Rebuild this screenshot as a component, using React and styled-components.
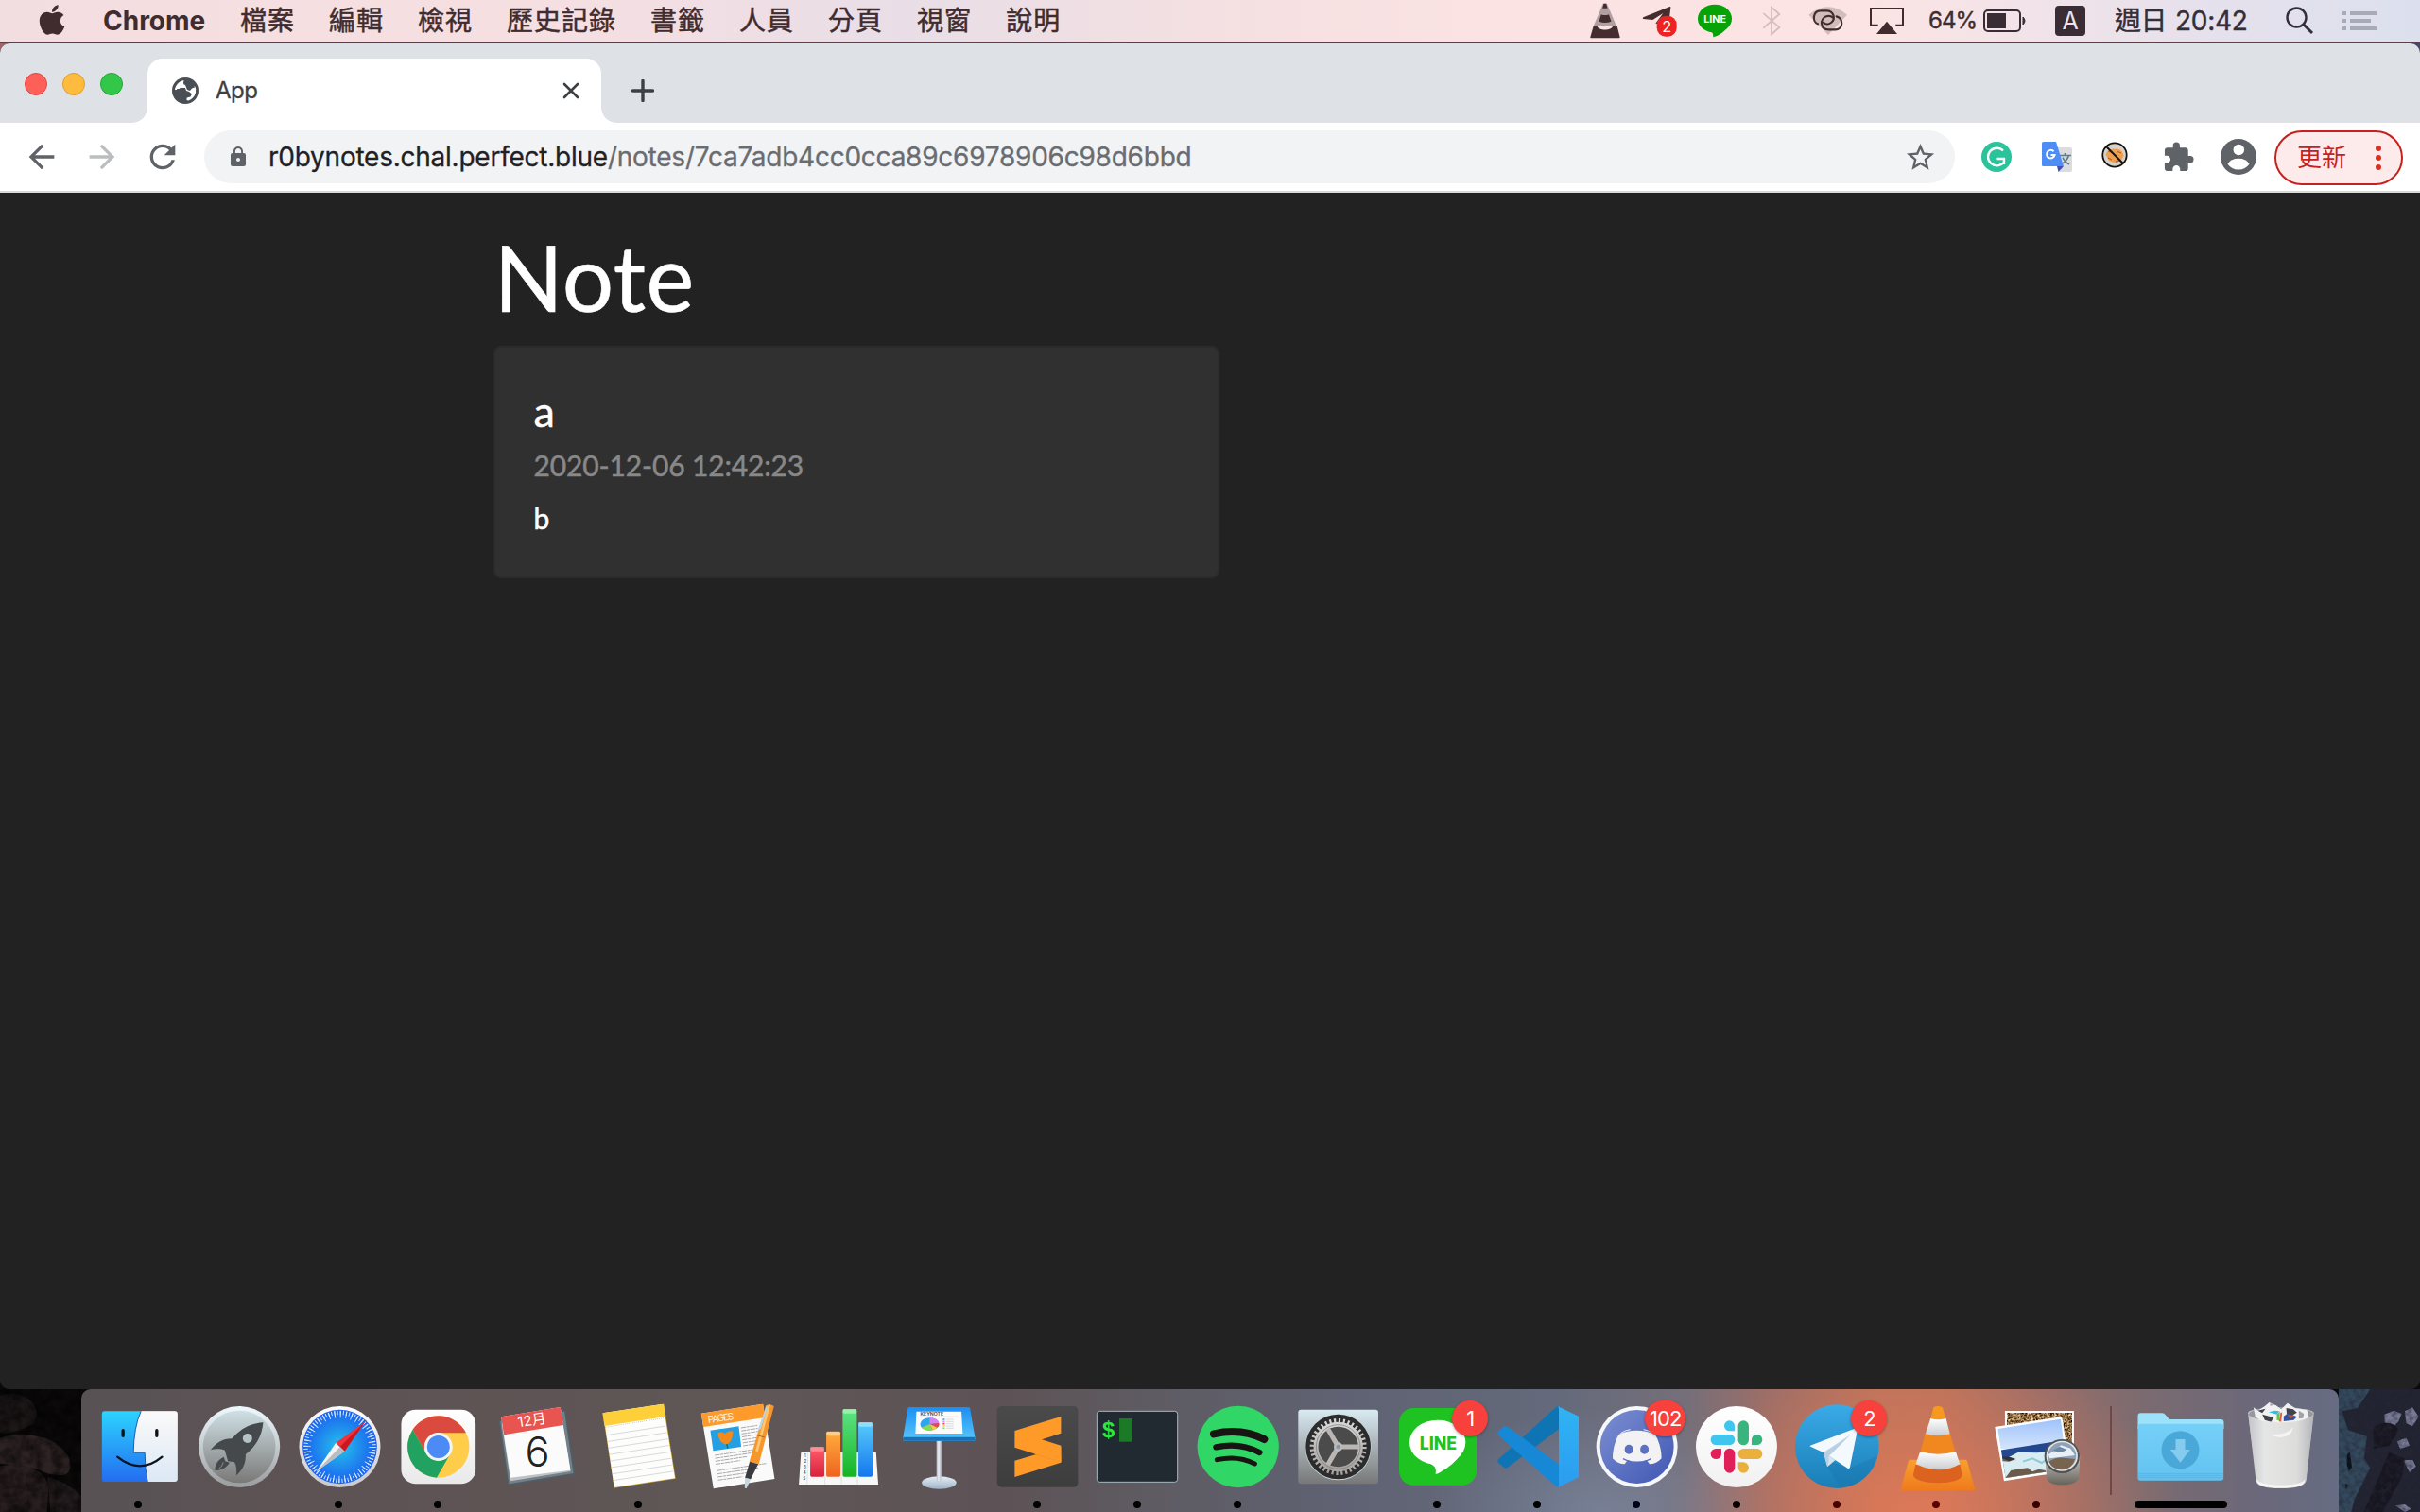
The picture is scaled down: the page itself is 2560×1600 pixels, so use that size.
import React from "react";
import styled, { createGlobalStyle, css } from "styled-components";
import { FaApple } from "react-icons/fa";
import {
  MdArrowBack,
  MdArrowForward,
  MdExtension,
  MdLock,
  MdRefresh,
  MdStarBorder,
} from "react-icons/md";

const uiFont = `Inter, "Noto Sans CJK TC", "Noto Sans CJK SC", sans-serif`;
const noteFont = `Lato, "Noto Sans CJK TC", sans-serif`;

const GlobalStyle = createGlobalStyle`
  html, body { margin: 0; padding: 0; background: #0c0a0c; }
  *, *::before, *::after { box-sizing: border-box; }
  svg { display: block; flex: none; }
`;

const Desktop = styled.div`
  width: 2560px;
  height: 1600px;
  display: flex;
  flex-direction: column;
  overflow: hidden;
  background: linear-gradient(90deg, #a0646a 0, #6a4048 50%, #45466a 100%) 0 0 / 100% 100px no-repeat, #09080a;
  font-family: ${uiFont};
`;

/* ---------- menu bar ---------- */

const MenuBar = styled.header`
  flex: none;
  height: 46px;
  padding: 0 46px 0 41px;
  display: flex;
  align-items: center;
  justify-content: space-between;
  color: #402c2e;
  border-bottom: 2px solid #5e3f49;
  background: linear-gradient(90deg, #f2dde1 0, #f6dfe0 300px, #f5dfe2 600px, #e9dee7 960px, #f5e0e1 1320px, #fce3e3 1600px, #fbe4e3 1980px, #f3e3e9 2130px, #e6e1ec 2330px, #dce0ee 2560px);
`;

const MenuGroup = styled.div`
  display: flex;
  align-items: center;
  height: 44px;
  gap: ${(p) => p.$gap || 0}px;
`;

const AppleBox = styled.div`
  width: 68px;
  height: 38px;
  margin-left: -4px;
  padding-right: 32px;
  margin-right: 4px;
`;

const AppName = styled.strong`
  width: 109px;
  font-size: 28px;
  line-height: 44px;
  font-weight: 700;
`;

const MenuItem = styled.span`
  font-size: 28px;
  line-height: 45px;
  letter-spacing: 1px;
  white-space: nowrap;
  -webkit-text-stroke: 0.5px currentColor;
`;

const StatusItem = styled.div`
  display: flex;
  width: ${(p) => p.$w}px;
  margin-left: ${(p) => p.$ml || 0}px;
  opacity: ${(p) => p.$o || 1};
`;

const StatusText = styled.span`
  width: ${(p) => p.$w}px;
  margin-left: ${(p) => p.$ml}px;
  font-size: ${(p) => p.$size}px;
  letter-spacing: ${(p) => p.$ls}px;
  line-height: 44px;
  white-space: nowrap;
  color: ${(p) => p.$color || "inherit"};
  -webkit-text-stroke: 0.4px currentColor;
`;

const InputSource = styled.span`
  width: 32px;
  height: 32px;
  margin-left: 30px;
  border-radius: 4px;
  background: #392c34;
  color: #f0e2ea;
  font-size: 25px;
  line-height: 33px;
  text-align: center;
`;

/* ---------- browser window ---------- */

const Window = styled.main`
  flex: none;
  height: 1424px;
  display: flex;
  flex-direction: column;
  border-radius: 10px;
  overflow: hidden;
  background: #222222;
`;

const TabStrip = styled.div`
  flex: none;
  height: 84px;
  display: flex;
  align-items: flex-end;
  background: #dee1e6;
`;

const TrafficLights = styled.div`
  width: 156px;
  height: 84px;
  padding: 31px 0 0 26px;
  display: flex;
  gap: 16px;
`;

const Light = styled.span`
  width: 24px;
  height: 24px;
  border-radius: 50%;
  background: ${(p) => p.$fill};
  border: 1px solid ${(p) => p.$edge};
`;

const Tab = styled.div`
  position: relative;
  width: 480px;
  height: 68px;
  padding: 0 23px 0 26px;
  display: flex;
  align-items: center;
  border-radius: 16px 16px 0 0;
  background: #ffffff;
  color: #3c4043;

  &::before,
  &::after {
    content: "";
    position: absolute;
    bottom: 0;
    width: 16px;
    height: 16px;
  }
  &::before {
    left: -16px;
    background: radial-gradient(circle at 0 0, transparent 15.5px, #fff 16px);
  }
  &::after {
    right: -16px;
    background: radial-gradient(circle at 100% 0, transparent 15.5px, #fff 16px);
  }
`;

const TabTitle = styled.span`
  flex: 1;
  margin-left: 18px;
  font-size: 24px;
  line-height: 32px;
  letter-spacing: -0.5px;
  -webkit-text-stroke: 0.3px currentColor;
`;

const NewTab = styled.div`
  height: 68px;
  padding: 22px 0 0 32px;
`;

const Toolbar = styled.div`
  flex: none;
  height: 74px;
  display: flex;
  align-items: center;
  background: #ffffff;
  border-bottom: 2px solid #d9d9da;
  color: #5f6368;
`;

const NavButtons = styled.div`
  width: 216px;
  padding-left: 24px;
  display: flex;
  align-items: center;
  gap: 24px;
`;

const NavIcon = styled.span`
  display: flex;
  width: 40px;
  opacity: ${(p) => (p.$disabled ? 0.42 : 1)};
`;

const Omnibox = styled.div`
  width: 1852px;
  height: 56px;
  padding: 0 19px 0 24px;
  display: flex;
  align-items: center;
  border-radius: 28px;
  background: #f1f3f4;
`;

const Url = styled.span`
  flex: 1;
  margin-left: 20px;
  font-size: 28px;
  line-height: 56px;
  letter-spacing: -0.24px;
  color: #696c70;
  -webkit-text-stroke: 0.3px currentColor;
`;

const UrlHost = styled.span`
  color: #1f2124;
`;

const Extensions = styled.div`
  display: flex;
  align-items: center;
`;

const ExtIcon = styled.span`
  display: flex;
  margin-left: ${(p) => p.$ml}px;
  margin-top: ${(p) => p.$mt || 0}px;
`;

const UpdateButton = styled.div`
  width: 136px;
  height: 58px;
  margin-left: 19px;
  margin-top: 1px;
  padding: 0 20px 0 22px;
  display: flex;
  align-items: center;
  justify-content: space-between;
  border: 2px solid #c5221f;
  border-radius: 29px;
  background: #fcebea;
  color: #c5221f;
  font-size: 26px;
  line-height: 50px;
`;

const Dots = styled.span`
  display: flex;
  flex-direction: column;
  gap: 4px;
  padding-right: 1px;
`;

const Dot = styled.i`
  width: 6px;
  height: 6px;
  border-radius: 50%;
  background: #d93025;
`;

/* ---------- note page ---------- */

const Page = styled.section`
  flex: 1;
  padding: 31.4px 0 0 522.4px;
  background: #222222;
  color: #ffffff;
  font-family: ${noteFont};
`;

const PageTitle = styled.h1`
  margin: 0 0 16px;
  font-size: 96px;
  line-height: 115px;
  font-weight: 400;
  letter-spacing: 0.5px;
  -webkit-text-stroke: 0.6px currentColor;
`;

const NoteCard = styled.article`
  width: 767.5px;
  height: 245.4px;
  padding: 40px;
  border: 2px solid #2b2b2b;
  border-radius: 8px;
  background: #303030;
  -webkit-text-stroke: 0.5px currentColor;
`;

const NoteTitle = styled.h4`
  margin: 0 0 12px;
  font-size: 45px;
  line-height: 54px;
  font-weight: 400;
`;

const NoteDate = styled.h6`
  margin: 0 0 16px;
  font-size: 30px;
  line-height: 36px;
  font-weight: 400;
  letter-spacing: -0.15px;
  color: #888888;
`;

const NoteBody = styled.p`
  margin: 0;
  font-size: 30px;
  line-height: 45px;
`;

/* ---------- dock ---------- */

const DesktopEdge = styled.footer`
  flex: none;
  height: 130px;
  display: flex;
`;

const Dock = styled.nav`
  width: 2388px;
  height: 130px;
  padding-left: 7.5px;
  display: flex;
  border-radius: 10px 10px 0 0;
  background:
    radial-gradient(ellipse 270px 170px at 1950px 130px, rgba(232, 122, 86, 0.75), transparent 100%),
    radial-gradient(ellipse 190px 110px at 1610px 130px, rgba(124, 134, 158, 0.75), transparent 100%),
    linear-gradient(90deg, #585254 0, #5e5354 280px, #5f5656 700px, #5d5356 980px, #5e5b62 1130px, #5f6272 1330px, #646a7b 1560px, #766f79 1700px, #9b6e68 1780px, #bb735c 1900px, #b9735d 1970px, #9a6e68 2070px, #7b6b70 2180px, #6b687a 2300px, #666c82 2388px);
`;

const DockTile = styled.div`
  position: relative;
  flex: none;
  width: 105.68px;
  display: flex;
  flex-direction: column;
  align-items: center;
`;

const TileArt = styled.svg`
  width: 105.68px;
  height: 110px;
  overflow: visible;
  font-family: ${uiFont};
`;

const Running = styled.i`
  width: 8px;
  height: 8px;
  margin: 8px 0 0;
  border-radius: 50%;
  background: ${(p) => p.$color || "#000"};
  ${(p) =>
    p.$stack &&
    css`
      width: 98px;
      border-radius: 4px;
    `}
`;

const Badge = styled.span`
  position: absolute;
  top: 12px;
  left: ${(p) => p.$left}px;
  min-width: 38px;
  height: 38px;
  padding: 0 5px;
  border-radius: 19px;
  background: #f8413d;
  box-shadow: 0 1px 3px rgba(0, 0, 0, 0.35);
  color: #fff;
  font-size: 22px;
  line-height: 38px;
  letter-spacing: -1px;
  text-align: center;
`;

const Separator = styled.i`
  flex: none;
  width: 2px;
  height: 94px;
  margin: 18px 20.5px 0 24.8px;
  background: #71474a;
`;

/* ---------- menu bar glyphs ---------- */

const MenuVlc = () => (
  <svg width="32" height="38" viewBox="67 10 95 112">
    <path d="M108 12h12l30 70H78z" fill="#b29fa1" />
    <path d="M110 12h8l4 15h-16zM102 46q12 5 24 0l8 22q-20 8-39 0zM78 82h11c5 16 45 16 50 0h13l9 36q0 2-3 2H70q-3 0-2-3z" fill="#432d2f" />
  </svg>
);

const MenuTelegram = () => (
  <svg width="38" height="36" viewBox="232 22 114 108">
    <path d="M236 65 320 31q4-1 3 3l-4 34-20 20-24-4 24-32-33 21-30-3q-4-2 0-5z" fill="#432d2f" />
    <rect x="279" y="60" width="63" height="66" rx="28" fill="#ee2222" />
    <text x="310.500" y="111" fontSize="49" fill="#fff" textAnchor="middle" fontFamily="Inter">2</text>
  </svg>
);

const MenuLine = () => (
  <svg width="36" height="36" viewBox="408 13 108 106">
    <ellipse cx="462" cy="59" rx="54" ry="45" fill="#06a206" />
    <path d="M430 90q30 8 27 28 30-8 47-34z" fill="#06a206" />
    <text x="462.500" y="71" fontSize="33" fontWeight="700" fill="#fff" textAnchor="middle" textLength="71" lengthAdjust="spacingAndGlyphs" fontFamily="Inter">LINE</text>
  </svg>
);

const MenuBluetooth = () => (
  <svg width="20" height="34" viewBox="609 18 60 102">
    <path d="m613 45 51 45-25 22V26l25 22-51 44" fill="none" stroke="#402c2e" strokeWidth="5" />
  </svg>
);

const MenuHotspot = () => (
  <svg width="42" height="32" viewBox="757 18 126 94">
    <path d="M758 46q61-50 122 0l-60 64z" fill="#402c2e" opacity=".22" />
    <g fill="none" stroke="#402c2e" strokeWidth="6.500" strokeLinecap="round">
      <path d="M787 75c-18-6-18-42 10-42h18c22 0 30 26 14 38-8 6-18 5-24-1" />
      <path d="M846 51c24 6 22 42-4 42h-20c-28 0-30-34-8-42 8-3 14-2 20 3" />
    </g>
  </svg>
);

const MenuAirplay = () => (
  <svg width="36" height="30" viewBox="954 22 108 88">
    <path d="M980 80h-23V27h102v53h-23" fill="none" stroke="#402c2e" strokeWidth="6" />
    <path d="m1008 68 33 40h-66z" fill="#402c2e" />
  </svg>
);

const MenuBattery = () => (
  <svg width="46" height="26" viewBox="0 0 46 26">
    <rect x="1" y="2" width="38" height="22" rx="4" fill="none" stroke="#392c34" strokeWidth="2" />
    <rect x="4" y="5" width="20" height="16" fill="#392c34" />
    <path d="M42 9q4 4 0 8z" fill="#392c34" stroke="#392c34" />
  </svg>
);

const MenuSearch = () => (
  <svg width="30" height="30" viewBox="0 0 30 30">
    <circle cx="11.500" cy="11.500" r="10" fill="none" stroke="#352e38" strokeWidth="2.400" />
    <path d="m18.500 18.500 9.500 9.500" stroke="#352e38" strokeWidth="3" />
  </svg>
);

const MenuList = () => (
  <svg width="36" height="20" viewBox="0 0 36 20">
    <path d="M0 2h4M8 2h28M0 10h4M8 10h22M0 18h4M8 18h28" stroke="#aaa9b6" strokeWidth="4" />
  </svg>
);

/* ---------- toolbar glyphs ---------- */

const Globe = () => (
  <svg width="28" height="28" viewBox="0 0 28 28">
    <circle cx="14" cy="14" r="14" fill="#4a4f55" />
    <path d="M3 13C3.600 8 7.500 4 12.500 3L12 5.500q0 2.500 2.500 2.500.500 2.500 3 3 3 .5 4-1.500l2.500-.5Q26 12 25 16q-1.500 6-7.500 8.500l-2-.5v-2.500l4-1 1.500-3-3-2.500-3-1-1-3H8.500L7 13z" fill="#fff" />
    <path d="M14 8q3-.5 3-3l2-1.500 4 4 1 3-3 1-2 2.500-3-1zM5 12h5l3 3-1 3.500 3 .5 1 2-4 4-4-3z" fill="#4a4f55" />
  </svg>
);

const CloseGlyph = () => (
  <svg width="18" height="18" viewBox="0 0 18 18">
    <path d="m2 2 14 14M16 2 2 16" stroke="#3c4043" strokeWidth="2.600" strokeLinecap="round" />
  </svg>
);

const PlusGlyph = () => (
  <svg width="24" height="24" viewBox="0 0 24 24">
    <path d="M12 1.500v21M1.500 12h21" stroke="#3c4043" strokeWidth="3.400" strokeLinecap="round" />
  </svg>
);

const Grammarly = () => (
  <svg width="32" height="32" viewBox="0 0 32 32">
    <circle cx="16" cy="16" r="16" fill="#2ac39b" />
    <path d="M23 9.500A9.300 9.300 0 1 0 23.500 22M16.500 18h7.500v6" fill="none" stroke="#fff" strokeWidth="2.300" />
  </svg>
);

const Translate = () => (
  <svg width="32" height="32" viewBox="0 0 32 32">
    <path d="M12 6h18q2 0 2 2v22q0 2-2 2H18z" fill="#dcdcdc" />
    <path d="M19 14.500h12M24.500 12v2.500M28.500 14.500q-2 6-7.500 9M22 16.500q2 5 7 7.500" fill="none" stroke="#607d8b" strokeWidth="1.700" />
    <path d="m16 26h7l-5.500 6z" fill="#3f51b5" />
    <path d="M1.500 0H15l8 26H1.500Q0 26 0 24.500v-23Q0 0 1.500 0z" fill="#4e8df5" />
    <path d="M12.500 10.200A4.300 4.300 0 1 0 13.600 14H9.500" fill="none" stroke="#fff" strokeWidth="2" />
  </svg>
);

const NoCookie = () => (
  <svg width="28" height="28" viewBox="0 0 28 28">
    <circle cx="14" cy="14" r="12.700" fill="#d6d2cd" stroke="#17120e" strokeWidth="1.800" />
    <path d="M4.500 13.500q2-5 7.500-6l7 .5q4 2.500 4.500 7l-3 5.500-6.500 2-6-2.500z" fill="#f0a04c" />
    <path d="m7 17 4 2m4 2 4-1M7 10l3 1m6-1 5 2" stroke="#b9652b" strokeWidth="1.300" />
    <path d="m5 5 18 18" stroke="#17120e" strokeWidth="2" />
  </svg>
);

const Avatar = () => (
  <svg width="38" height="38" viewBox="0 0 38 38">
    <circle cx="19" cy="19" r="19" fill="#5f6368" />
    <circle cx="19.300" cy="11.500" r="5.800" fill="#fff" />
    <path d="M7.500 26.500Q11 20.800 19 20.800t11.500 5.700q-4 6-11.500 6t-11.500-6z" fill="#fff" />
  </svg>
);

/* ---------- dock artwork ---------- */

const Grad = ({ id, from, to, diag }) => (
  <linearGradient id={id} x1="0" y1="0" x2={diag ? 1 : 0} y2="1">
    <stop offset="0" stopColor={from} />
    <stop offset="1" stopColor={to} />
  </linearGradient>
);

const Finder = () => (
  <>
    <Grad id="fi1" from="#2dd3ff" to="#236df0" />
    <Grad id="fi2" from="#fafafa" to="#dce8f4" />
    <rect x="321" y="130" width="240" height="224" rx="9" fill="url(#fi1)" />
    <path d="M445 130h107q9 0 9 9v206q0 9-9 9h-86q-9-40-9-91h-36q1-83 24-133z" fill="url(#fi2)" />
    <path d="M445 130q-23 50-24 132h36q0 52 9 92" fill="none" stroke="#1a5bb0" strokeWidth="3" />
    <path d="M388 191v17M495 191v17" stroke="#111" strokeWidth="10" strokeLinecap="round" />
    <path d="M370 275q72 58 142 0" fill="none" stroke="#0b1420" strokeWidth="7" strokeLinecap="round" />
  </>
);

const Launchpad = () => (
  <>
    <Grad id="la1" from="#eefaff" to="#9a9c9e" />
    <Grad id="la2" from="#cfe0e5" to="#7a7977" />
    <circle cx="759" cy="243" r="129" fill="url(#la1)" />
    <circle cx="759" cy="243" r="115" fill="url(#la2)" />
    <path d="M835 166c-44 3-79 25-99 51-26 0-48 10-68 36 16-5 32-4 45 1l10 35 20 3c8 12 8 27 6 42 22-18 32-42 30-67 34-26 52-60 56-101z" fill="#45494c" />
    <circle cx="785" cy="216" r="15" fill="#b5c2c6" />
    <path d="M682 318c0-18 8-34 28-43l4 14 14 4c-9 16-26 25-46 25z" fill="#45494c" />
    <path d="m694 312c8-4 12-12 14-20" fill="none" stroke="#8c9294" strokeWidth="3" />
  </>
);

const Safari = () => (
  <>
    <radialGradient id="sa1">
      <stop offset="0" stopColor="#24c3ea" />
      <stop offset="1" stopColor="#1b5ff0" />
    </radialGradient>
    <Grad id="sa2" from="#fdfdfd" to="#c9c9cc" />
    <circle cx="1077" cy="243" r="129" fill="url(#sa2)" />
    <circle cx="1077" cy="243" r="118" fill="url(#sa1)" />
    <circle cx="1077" cy="243" r="108" fill="none" stroke="#d3ebff" strokeWidth="13" strokeDasharray="3 6.425" />
    <circle cx="1077" cy="243" r="103" fill="none" stroke="#d3ebff" strokeWidth="22" strokeDasharray="3 14.977" />
    <path d="m1158 163-94 68 28 26z" fill="#f0333a" />
    <path d="m1158 163-80 80 14 14z" fill="#cc1722" />
    <path d="m1002 322 62-91 28 26z" fill="#f3f3f3" />
    <path d="m1002 322 76-79 14 14z" fill="#b9bcc0" />
  </>
);

const Chrome = () => (
  <>
    <Grad id="ch1" from="#ffffff" to="#e9e9ea" />
    <rect x="1271" y="125" width="236" height="236" rx="46" fill="url(#ch1)" />
    <circle cx="1389" cy="243" r="98" fill="#ffcd4a" />
    <path d="M1307.100 189.100A98 98 0 0 1 1476.600 199H1389A44 44 0 0 0 1350.900 265z" fill="#db4a3f" />
    <path d="M1307.100 189.100A98 98 0 0 0 1383.300 340.900L1427.100 265A44 44 0 0 1 1350.900 265z" fill="#22a260" />
    <circle cx="1389" cy="243" r="45" fill="#f4f4f4" />
    <circle cx="1389" cy="243" r="36" fill="#4c8bf5" />
  </>
);

const Calendar = () => (
  <>
    <path d="m51 160 213-33 32 204-214 36z" fill="#4f5d66" />
    <path d="m57 163 204-32 28 196-204 34z" fill="#72808a" />
    <path d="m62 170 188-29 30 180-190 31z" fill="#bfc1c2" />
    <path d="m60 148 188-31 32 200-190 24z" fill="#fbfbfb" />
    <path d="m60 148 188-31 10 57-189 31z" fill="#e8544f" />
    <text transform="translate(160 174) rotate(-9)" fontSize="45" fill="#fff" textAnchor="middle">12月</text>
    <text x="175" y="305" fontSize="130" fontWeight="300" fill="#222" textAnchor="middle">6</text>
  </>
);

const Notes = () => (
  <>
    <path d="m381 136 194-29 38 237-195 30z" fill="#c9a024" />
    <path d="m383 136 190-29 38 236-193 29z" fill="#fdfdfc" />
    <path d="m381 136 194-29 7 40-195 30z" fill="#fdd03a" />
    <path d="m388 181 194-30" stroke="#8b8b80" strokeWidth="2" strokeDasharray="2 4" />
    <g stroke="#c5c5c8" strokeWidth="2">
      {[0, 1, 2, 3, 4, 5, 6, 7].map((i) => (
        <path key={i} d={`m${393 + i * 3.400} ${206 + i * 20.500} 190-29`} />
      ))}
    </g>
  </>
);

const Pages = () => (
  <>
    <path d="m693 137 196-30 37 238-194 31z" fill="#fafafa" />
    <path d="m693 137 196-30 7 43-196 30z" fill="#fd9a2c" />
    <text transform="translate(757 162) rotate(-8.500)" fontSize="31" fill="#fff3e0" textAnchor="middle" textLength="84">PAGES</text>
    <path d="m722 191 90-13 8 65-89 13z" fill="#259fe4" />
    <path d="M746 200q14-8 22 2 10-12 26-8-2 34-20 42-24-4-28-36z" fill="#f58a1c" />
    <path d="m774 234 3 14" stroke="#2a6b3a" strokeWidth="4" />
    <g stroke="#a9a9a9" strokeWidth="3" strokeDasharray="16 2 9 2">
      {[0, 1, 2, 3, 4, 5, 6].map((i) => (
        <path key={i} d={`m${819 + i * 1.200} ${183 + i * 9.500} 52-8`} />
      ))}
      {[0, 1, 2, 3].map((i) => (
        <path key={i} d={`m${736 + i} ${270 + i * 9.500} ${144 - i * 22}-${21 - i * 3}`} />
      ))}
      {[0, 1, 2, 3].map((i) => (
        <path key={i} d={`m${743 + i} ${319 + i * 10} ${156 - i * 26}-${23 - i * 4}`} />
      ))}
    </g>
    <path d="M898 112q12-8 26 2l-48 184-30-8z" fill="#f6962b" />
    <path d="m905 112 8-3-40 150-8-3z" fill="#ffc774" />
    <path d="m900 113-28 78 10-4 22-70z" fill="#b9d7ea" />
    <path d="m869 206 26 7" stroke="#b5651a" strokeWidth="3" />
    <path d="m847 290 27 8-24 48-18-4z" fill="#3b3b3f" />
    <path d="m832 341 18 5-13 29q-5 1-6-2z" fill="#c8d6de" />
  </>
);

const numberBars = [
  [1041, 243, "#ff5f6d", "#d9203a", "#ff8c92"],
  [1092, 194, "#ffae3d", "#ef6320", "#ffce80"],
  [1144, 123, "#5fe487", "#16b323", "#92f2a8"],
  [1194, 165, "#58ccfb", "#1377ee", "#90dcfc"],
];

const Numbers = () => (
  <>
    <path d="M1012 259h238l7 104h-252z" fill="#f7f7f8" />
    <path d="M1038 259h-4l-3 104M1088 259v104M1140 259v104M1191 259v104" stroke="#d7d7d9" strokeWidth="2" fill="none" />
    <g fontSize="13" fontWeight="600" fill="#555">
      {[1, 2, 3, 4, 5].map((n) => (
        <text key={n} x={1023 - n} y={257 + n * 18}>{n}</text>
      ))}
    </g>
    {numberBars.map(([x, y, a, b, cap], i) => (
      <g key={x}>
        <Grad id={`nu${i}`} from={a} to={b} />
        <rect x={x} y={y} width="45" height={338 - y} rx="5" fill={`url(#nu${i})`} />
        <rect x={x + 1} y={y + 1} width="43" height="13" rx="4" fill={cap} />
      </g>
    ))}
  </>
);

const Keynote = () => (
  <>
    <Grad id="ke1" from="#1b8ef4" to="#59c8fb" />
    <Grad id="ke2" from="#e6edf5" to="#9fb4c9" />
    <ellipse cx="1449" cy="357" rx="55" ry="20" fill="url(#ke2)" />
    <path d="M1441 222h15v130q-7 5-15 0z" fill="#c3ccd6" />
    <path d="M1446 222h4v130h-4z" fill="#eef2f6" />
    <path d="M1355 117h187q4 0 5 4l17 97q0 6-5 6h-220q-6 0-5-6l16-97q1-4 5-4z" fill="url(#ke1)" />
    <path d="M1336 212h226l2 8q0 4-5 4h-220q-6 0-5-6z" fill="#1b6fb6" />
    <path d="M1377 131h143l4 70h-150z" fill="#fbfbfb" />
    <text x="1389" y="144" fontSize="13" fontWeight="600" fill="#444" textLength="74" lengthAdjust="spacingAndGlyphs">KEYNOTE</text>
    <path d="M1388 147h121" stroke="#ccc" />
    <ellipse cx="1419" cy="171" rx="30" ry="20" fill="#2fa4ee" />
    <path d="M1419 171v-20q28 0 30 17z" fill="#d780f0" />
    <path d="m1419 171 30-3q2 9-6 14z" fill="#f23f55" />
    <path d="m1419 171 24 11q-6 6-14 8z" fill="#fcc733" />
    <path d="m1419 171 10 19q-26 3-36-8z" fill="#86d957" />
    <g strokeWidth="5">
      {["#3aa6ee", "#d780f0", "#f23f55", "#fcc733", "#86d957"].map((c, i) => (
        <g key={c}>
          <path d={`M1461 ${156 + i * 7}h6`} stroke={c} />
          <path d={`M1471 ${156 + i * 7}h24`} stroke="#c9c9c9" strokeWidth="2" />
        </g>
      ))}
    </g>
  </>
);

const Sublime = () => (
  <>
    <Grad id="su1" from="#4a4a4a" to="#3d3d3d" />
    <rect x="72" y="114" width="257" height="257" rx="14" fill="url(#su1)" />
    <path d="m128 287 147-43v49l-147 46z" fill="#ff9a28" />
    <path d="m190 266 85 26v-20l-60-14z" fill="#e8851c" />
    <path d="m128 192 147-45v53l-61 20 61 19v53l-147-47z" fill="#ff9a28" />
  </>
);

const Terminal = () => (
  <>
    <rect x="391" y="130" width="256" height="225" rx="9" fill="#222a31" stroke="#a9b9c2" strokeWidth="3" />
    <text x="428" y="214" fontSize="72" fontWeight="700" fill="#2ae83e" textAnchor="middle" fontFamily="'Liberation Mono', monospace">$</text>
    <rect x="462" y="153" width="39" height="74" fill="#1b7a26" />
  </>
);

const Spotify = () => (
  <>
    <circle cx="838" cy="243" r="129.500" fill="#30d766" />
    <g fill="none" stroke="#191414" strokeLinecap="round">
      <path d="M761 202q87-20 160 17" strokeWidth="24" />
      <path d="M768 244q76-16 138 17" strokeWidth="19" />
      <path d="M771 284q66-15 120 13" strokeWidth="15" />
    </g>
  </>
);

const Preferences = () => (
  <>
    <Grad id="pr1" from="#d9ebf2" to="#777" />
    <Grad id="pr2" from="#d5d5d5" to="#a6a3a0" />
    <rect x="1028" y="125" width="254" height="236" rx="9" fill="url(#pr1)" />
    <circle cx="1155" cy="244" r="105" fill="#c4d3db" />
    <circle cx="1155" cy="243" r="103" fill="#2c2c2d" />
    <circle cx="1155" cy="243" r="72" fill="#4b4b4c" />
    <g fill="none" stroke="url(#pr2)">
      <circle cx="1155" cy="243" r="83" strokeWidth="14" strokeDasharray="6.500 7.990" />
      <circle cx="1155" cy="243" r="71" strokeWidth="15" />
      <path d="M1155 243h65M1155 243l-33-57M1155 243l-33 57" strokeWidth="15" stroke="#b9b6b3" />
    </g>
    <circle cx="1155" cy="243" r="70" fill="none" stroke="#77787a" strokeWidth="2" />
    <circle cx="1155" cy="243" r="14" fill="#bdbbb9" />
    <circle cx="1155" cy="243" r="7" fill="#8b98a3" />
  </>
);

const Line = () => (
  <>
    <rect x="1350" y="120" width="246" height="245" rx="46" fill="#1ec322" />
    <ellipse cx="1472" cy="229" rx="89" ry="71" fill="#fff" />
    <path d="M1415 283c36 15 56 18 51 43q-1 5 4 3 50-24 79-66z" fill="#fff" />
    <text x="1474" y="252" fontSize="55" fontWeight="800" fill="#1ec322" textAnchor="middle" textLength="118" lengthAdjust="spacingAndGlyphs">LINE</text>
  </>
);

const VsCode = () => (
  <>
    <Grad id="vs1" from="#2fb4f3" to="#2c9cf0" />
    <path d="m104 283 181-164q5-5 11-4v72L133 309q-7 4-13-2l-16-14q-4-5 0-10z" fill="#0f74b4" />
    <path d="m104 195 16-15q7-6 14-1l162 120v72q-7 0-11-4L104 206q-4-6 0-11z" fill="#1788d6" />
    <path d="m292 114 67 32v194l-65 31q2-3 2-8V123q0-6-4-9z" fill="url(#vs1)" />
  </>
);

const Discord = () => (
  <>
    <Grad id="di1" from="#7c8fd3" to="#4057b3" diag />
    <circle cx="543" cy="243" r="129" fill="#f6f7f9" />
    <circle cx="543" cy="243" r="117" fill="url(#di1)" />
    <path d="M485 204q56-25 116 0 20 36 20 76-16 18-38 18l-9-12q-31 7-61 0l-9 12q-22 0-38-18 0-40 19-76z" fill="#f2f2f4" />
    <path d="M491 200q12-9 31-12M564 188q18 3 31 12" fill="none" stroke="#f2f2f4" strokeWidth="3" />
    <path d="M499 281q12 6 22 8M588 281q-12 6-22 8" fill="none" stroke="#5a6dc0" strokeWidth="4" />
    <ellipse cx="517.500" cy="251" rx="13.500" ry="15" fill="#5c70c2" />
    <ellipse cx="567" cy="251" rx="13.500" ry="15" fill="#5c70c2" />
  </>
);

const Slack = () => (
  <>
    <Grad id="sl1" from="#ffffff" to="#f1f1f1" />
    <circle cx="861" cy="243" r="129" fill="url(#sl1)" />
    <path d="M855 193h-16.500a16.500 16.500 0 1 1 16.500-16.500z" fill="#40c5ee" />
    <rect x="779" y="204" width="77" height="33" rx="16.500" fill="#40c5ee" />
    <rect x="866" y="160" width="34" height="78" rx="17" fill="#38b57f" />
    <path d="M909 237v-16.500a17 16.500 0 1 1 17 16.500z" fill="#38b57f" />
    <path d="M813 249v16.500a17 16.500 0 1 1-17-16.500z" fill="#df2059" />
    <rect x="822" y="248" width="34" height="78" rx="17" fill="#df2059" />
    <rect x="866" y="249" width="77" height="33" rx="16.500" fill="#eab03c" />
    <path d="M866 292h16.500a17 17 0 1 1-16.500 17z" fill="#eab03c" />
  </>
);

const Telegram = () => (
  <>
    <Grad id="te1" from="#3aaae8" to="#1a7eb6" />
    <circle cx="1179" cy="242" r="133" fill="url(#te1)" />
    <path d="m1148 306 18-14 50 20 92-40c-14 52-60 98-118 102z" fill="#1a74aa" opacity=".35" />
    <path d="m1094 239 145-55q6-1 5 5l-24 119q-2 6-7 3l-58-38-5 32-14-44-41-19q-3-1-1-3z" fill="#f4f9fd" />
    <path d="m1136 261 86-56-68 67-3 34q-4 0-5-5z" fill="#b9cfe2" />
    <path d="m1154 272 20 13-24 20z" fill="#d5e3f0" />
  </>
);

const Vlc = () => (
  <>
    <Grad id="vl1" from="#f9a02c" to="#ef7a1c" />
    <Grad id="vl2" from="#ffffff" to="#c9ccd0" />
    <path d="M1410 284h176q4 0 5 4l25 89q0 5-4 5h-228q-5 0-4-5l25-89q1-4 5-4z" fill="url(#vl1)" />
    <path d="M1427 300h142l6 32c0 34-153 34-155 0z" fill="#dc6220" />
    <path d="M1484 118q14-8 29 0l11 39h-49z" fill="#f7991f" />
    <path d="M1475 153q23 8 49 0l13 51q-40 11-79 0z" fill="url(#vl2)" />
    <path d="M1458 202q40 12 79 0l17 58q-56 14-112 0z" fill="#f0871f" />
    <path d="M1442 258q56 16 113 0l13 40q-62 36-140 0z" fill="url(#vl2)" />
  </>
);

const Preview = () => (
  <>
    <Grad id="pv1" from="#9cc0fb" to="#d4e5fc" />
    <Grad id="pv2" from="#c9c7c0" to="#65625a" />
    <filter id="pvSand" x="0" y="0" width="1" height="1" colorInterpolationFilters="sRGB">
      <feTurbulence type="fractalNoise" baseFrequency=".15" numOctaves="3" seed="4" />
      <feColorMatrix values="1.600 0 0 0 -.24  1.500 0 0 0 -.32  1.300 0 0 0 -.38  0 0 0 0 1" />
    </filter>
    <clipPath id="pvPhoto"><path d="m220 186 200-31 20 158-195 29z" /></clipPath>
    <path d="M243 129h219v202H243z" fill="#fff" />
    <path d="M251 136h203v180H251z" filter="url(#pvSand)" />
    <path d="m211 180 213-33 26 172-210 33z" fill="#fff" />
    <g clipPath="url(#pvPhoto)">
      <path d="M210 150h240v100H210z" fill="url(#pv1)" />
      <path d="m220 255 230-36v130H220z" fill="#23488f" />
      <path d="m225 284 30-8 30-16 60 2 100-12v110H225z" fill="#d9ecf2" />
      <path d="m230 276 30 0 18 6-22 8-26-2zM262 318l34-6 20-2 14 12 20-8 22 4v30H240z" fill="#6b5b4a" />
      <path d="m300 290 30-10 30 14 14-10" fill="none" stroke="#8fc9d6" strokeWidth="6" />
      <path d="m226 276 26-2 22 8-18 6z" fill="#2f3340" />
    </g>
    <path d="M370 276 376 344q6 20 50 20t52-24l3-68z" fill="url(#pv2)" />
    <ellipse cx="424" cy="273" rx="56" ry="54" fill="#505256" />
    <ellipse cx="424" cy="272" rx="50" ry="48" fill="#e2e6e8" />
    <ellipse cx="424" cy="272" rx="45" ry="43" fill="#8da1b8" />
    <path d="M381 268q20-14 40-30l30 10 14 22-30 4-50 6z" fill="#e9f0f5" />
    <path d="M382 290q24-16 50-12l34 4q-12 34-42 34t-42-26z" fill="#78644e" />
    <path d="m392 256 24-14 24 10-16 8z" fill="#6c86a5" />
  </>
);

const Downloads = () => (
  <>
    <Grad id="do1" from="#75d0f8" to="#62c2f0" />
    <path d="M666 145q0-9 9-9h68q7 0 11 6l12 14h163q10 0 10 10v20H666z" fill="#9ce2fa" />
    <path d="M666 178q0-8 8-8h256q8 0 8 8v165q0 7-7 7H673q-7 0-7-7z" fill="url(#do1)" />
    <path d="M668 329h269M668 335h269M668 341h269" stroke="#4ea9d6" strokeWidth="1.500" />
    <circle cx="801" cy="253" r="60" fill="#49a8d7" />
    <path d="M786 219h30v33h16l-31 41-32-41h17z" fill="#84cbee" />
  </>
);

const Trash = () => (
  <>
    <linearGradient id="tr1">
      <stop offset="0" stopColor="#c4c5c8" />
      <stop offset=".25" stopColor="#e6e6e6" />
      <stop offset=".75" stopColor="#dcdcdb" />
      <stop offset="1" stopColor="#b5b6ba" />
    </linearGradient>
    <path d="M1015 136q0-16 104-16t105 16l-26 215q-4 24-79 24t-79-24z" fill="url(#tr1)" />
    <ellipse cx="1119" cy="139" rx="102" ry="22" fill="#96989d" />
    <path d="m1032 118 14 10 22-14 14-12 22 10 16 12 20-20 24 16 14 2 24 4 6 24-30 14-60 4-60-6-20-14z" fill="#f1f1f1" />
    <path d="m1046 128 24-6-10 14zM1060 140l36 10-8 14-20-6zM1136 120l22 4 12 10-16 10-16-2z" fill="#41434a" />
    <path d="m1080 133 20-5 14 2-8 10z" fill="#29c0ee" />
    <path d="m1106 140 10-10-2 30-8-2z" fill="#6fc04a" />
    <path d="m1118 134 5 0-3 30-7-2z" fill="#e55a3c" />
    <path d="m1128 146 14-10 28 12-10 10-32 4z" fill="#34519b" />
    <path d="m1140 140 22 6-14 8z" fill="#c6502c" />
    <path d="m1176 128 16 10-2 14-14 2zM1084 106l14 2-12 6z" fill="#a0a2a6" />
    <path d="M1016 144q32 22 102 22t104-24l-22 206q-4 24-79 24t-79-24z" fill="url(#tr1)" opacity=".88" />
    <path d="M1090 205q50 0 68-24-4 30-40 32-18 0-28-8z" fill="#f4f4f4" />
    <path d="M1042 345q10 20 77 20t77-20l-2 10q-8 18-75 18t-75-18z" fill="#fff" opacity=".75" />
  </>
);

const dockApps = [
  { Art: Finder, x: 279.5, running: "#000" },
  { Art: Launchpad, x: 596.5 },
  { Art: Safari, x: 913.6, running: "#000" },
  { Art: Chrome, x: 1230.6, running: "#000" },
  { Art: Calendar, x: 17.6 },
  { Art: Notes, x: 334.7, running: "#000" },
  { Art: Pages, x: 651.7 },
  { Art: Numbers, x: 968.8 },
  { Art: Keynote, x: 1285.8 },
  { Art: Sublime, x: 42.8, running: "#000" },
  { Art: Terminal, x: 359.9, running: "#000" },
  { Art: Spotify, x: 676.9, running: "#000" },
  { Art: Preferences, x: 994 },
  { Art: Line, x: 1311, running: "#000", badge: "1", badgeLeft: 69 },
  { Art: VsCode, x: 68, running: "#000" },
  { Art: Discord, x: 385.1, running: "#00001a", badge: "102", badgeLeft: 61.5 },
  { Art: Slack, x: 702.1, running: "#0a0000" },
  { Art: Telegram, x: 1019.2, running: "#4a0000", badge: "2", badgeLeft: 68.5 },
  { Art: Vlc, x: 1336.2, running: "#580000" },
  { Art: Preview, x: 183.2, running: "#3a0000" },
];

/* ---------- wallpaper ---------- */

const RockLeft = () => (
  <svg width="86" height="130" viewBox="0 0 258 390">
    <filter id="rl" x="0" y="0" width="1" height="1">
      <feTurbulence type="fractalNoise" baseFrequency=".03" numOctaves="5" seed="8" />
      <feColorMatrix values="0 0 0 0 0  0 0 0 0 0  0 0 0 0 0  1.600 0 0 0 -.45" />
    </filter>
    <path d="M0 0h258v390H0z" fill="#0b090a" />
    <path d="M0 20q60-20 100 20 30 40 5 70-50 30-105 30z" fill="#1c1617" />
    <path d="M0 155q60-20 120-5 60 10 95 60 20 50-10 62-50 4-80-16l-125-20z" fill="#2e2324" />
    <path d="M0 245q60-14 110 10 40 20 45 60l-6 75H0z" fill="#291f20" />
    <path d="M150 280q60 10 108 60v50H160z" fill="#241c1e" />
    <path d="M0 0h258v390H0z" filter="url(#rl)" opacity=".7" />
  </svg>
);

const RockRight = () => (
  <svg width="86" height="130" viewBox="0 0 258 390">
    <filter id="rr" x="0" y="0" width="1" height="1">
      <feTurbulence type="fractalNoise" baseFrequency=".06" numOctaves="4" seed="21" />
      <feColorMatrix values="0 0 0 0 0.020  0 0 0 0 0.020  0 0 0 0 0.040  2.200 0 0 0 -.8" />
    </filter>
    <path d="M0 0h258v390H0z" fill="#33495c" />
    <path d="m100 0-40 60-50 10 20 60 60 20-10 70 20 30-50 100-10 40h218V0z" fill="#222330" />
    <path d="m145 80 30-12 25 10-10 24-20 22-24-20zM210 70l24-12 20 30-20 30-20-10zM185 165l30-10 10 24-30 10zM205 225l30 0 10 20-20 20zM180 370l30-4 20 14-20 10z" fill="#777a94" />
    <path d="m26 210 8-12 4 20 4 30-10 12-6-20zM20 300l10 4-6 14z" fill="#0c1018" />
    <path d="M110 120q60-30 80 10l-30 50-50 10zM160 200l50 20-10 60-60 110h-60z" fill="#17161f" />
    <path d="M0 0h258v390H0z" filter="url(#rr)" opacity=".6" />
  </svg>
);

const menus = ["檔案", "編輯", "檢視", "歷史記錄", "書籤", "人員", "分頁", "視窗", "說明"];

export default function App() {
  return (
    <Desktop>
      <GlobalStyle />
      <MenuBar>
        <MenuGroup>
          <AppleBox>
            <FaApple size={36} />
          </AppleBox>
          <MenuGroup $gap={36}>
            <AppName>Chrome</AppName>
            {menus.map((m) => (
              <MenuItem key={m}>{m}</MenuItem>
            ))}
          </MenuGroup>
        </MenuGroup>
        <MenuGroup>
          <StatusItem $w={32}><MenuVlc /></StatusItem>
          <StatusItem $w={38} $ml={23}><MenuTelegram /></StatusItem>
          <StatusItem $w={36} $ml={21}><MenuLine /></StatusItem>
          <StatusItem $w={20} $ml={32} $o={0.22}><MenuBluetooth /></StatusItem>
          <StatusItem $w={42} $ml={29}><MenuHotspot /></StatusItem>
          <StatusItem $w={36} $ml={23}><MenuAirplay /></StatusItem>
          <StatusText $w={58} $ml={26} $size={24} $ls={-1}>64%</StatusText>
          <StatusItem $w={46}><MenuBattery /></StatusItem>
          <InputSource>A</InputSource>
          <StatusText $w={65} $ml={31} $size={28} $ls={-0.5} $color="#352e38">週日</StatusText>
          <StatusText $w={76} $ml={-1} $size={28} $ls={-0.3} $color="#352e38">20:42</StatusText>
          <StatusItem $w={30} $ml={41}><MenuSearch /></StatusItem>
          <StatusItem $w={36} $ml={30}><MenuList /></StatusItem>
        </MenuGroup>
      </MenuBar>

      <Window>
        <TabStrip>
          <TrafficLights>
            <Light $fill="#fe5f58" $edge="#e2463f" />
            <Light $fill="#febc3e" $edge="#df9e2c" />
            <Light $fill="#32c748" $edge="#22a834" />
          </TrafficLights>
          <Tab>
            <Globe />
            <TabTitle>App</TabTitle>
            <CloseGlyph />
          </Tab>
          <NewTab><PlusGlyph /></NewTab>
        </TabStrip>

        <Toolbar>
          <NavButtons>
            <NavIcon><MdArrowBack size={40} /></NavIcon>
            <NavIcon $disabled><MdArrowForward size={40} /></NavIcon>
            <NavIcon><MdRefresh size={40} /></NavIcon>
          </NavButtons>
          <Omnibox>
            <MdLock size={24} />
            <Url>
              <UrlHost>r0bynotes.chal.perfect.blue</UrlHost>/notes/7ca7adb4cc0cca89c6978906c98d6bbd
            </Url>
            <MdStarBorder size={35} />
          </Omnibox>
          <Extensions>
            <ExtIcon $ml={28}><Grammarly /></ExtIcon>
            <ExtIcon $ml={32}><Translate /></ExtIcon>
            <ExtIcon $ml={31} $mt={-5}><NoCookie /></ExtIcon>
            <ExtIcon $ml={36}><MdExtension size={35} /></ExtIcon>
            <ExtIcon $ml={27}><Avatar /></ExtIcon>
            <UpdateButton>
              更新
              <Dots><Dot /><Dot /><Dot /></Dots>
            </UpdateButton>
          </Extensions>
        </Toolbar>

        <Page>
          <PageTitle>Note</PageTitle>
          <NoteCard>
            <NoteTitle>a</NoteTitle>
            <NoteDate>2020-12-06 12:42:23</NoteDate>
            <NoteBody>b</NoteBody>
          </NoteCard>
        </Page>
      </Window>

      <DesktopEdge>
        <RockLeft />
        <Dock>
          {dockApps.map(({ Art, x, running, badge, badgeLeft }) => (
            <DockTile key={x}>
              <TileArt viewBox={`${x} 60 317.040 330`}><Art /></TileArt>
              {running && <Running $color={running} />}
              {badge && <Badge $left={badgeLeft}>{badge}</Badge>}
            </DockTile>
          ))}
          <Separator />
          <DockTile>
            <TileArt viewBox="643.500 60 317.040 330"><Downloads /></TileArt>
            <Running $stack />
          </DockTile>
          <DockTile>
            <TileArt viewBox="960.500 60 317.040 330"><Trash /></TileArt>
          </DockTile>
        </Dock>
        <RockRight />
      </DesktopEdge>
    </Desktop>
  );
}
